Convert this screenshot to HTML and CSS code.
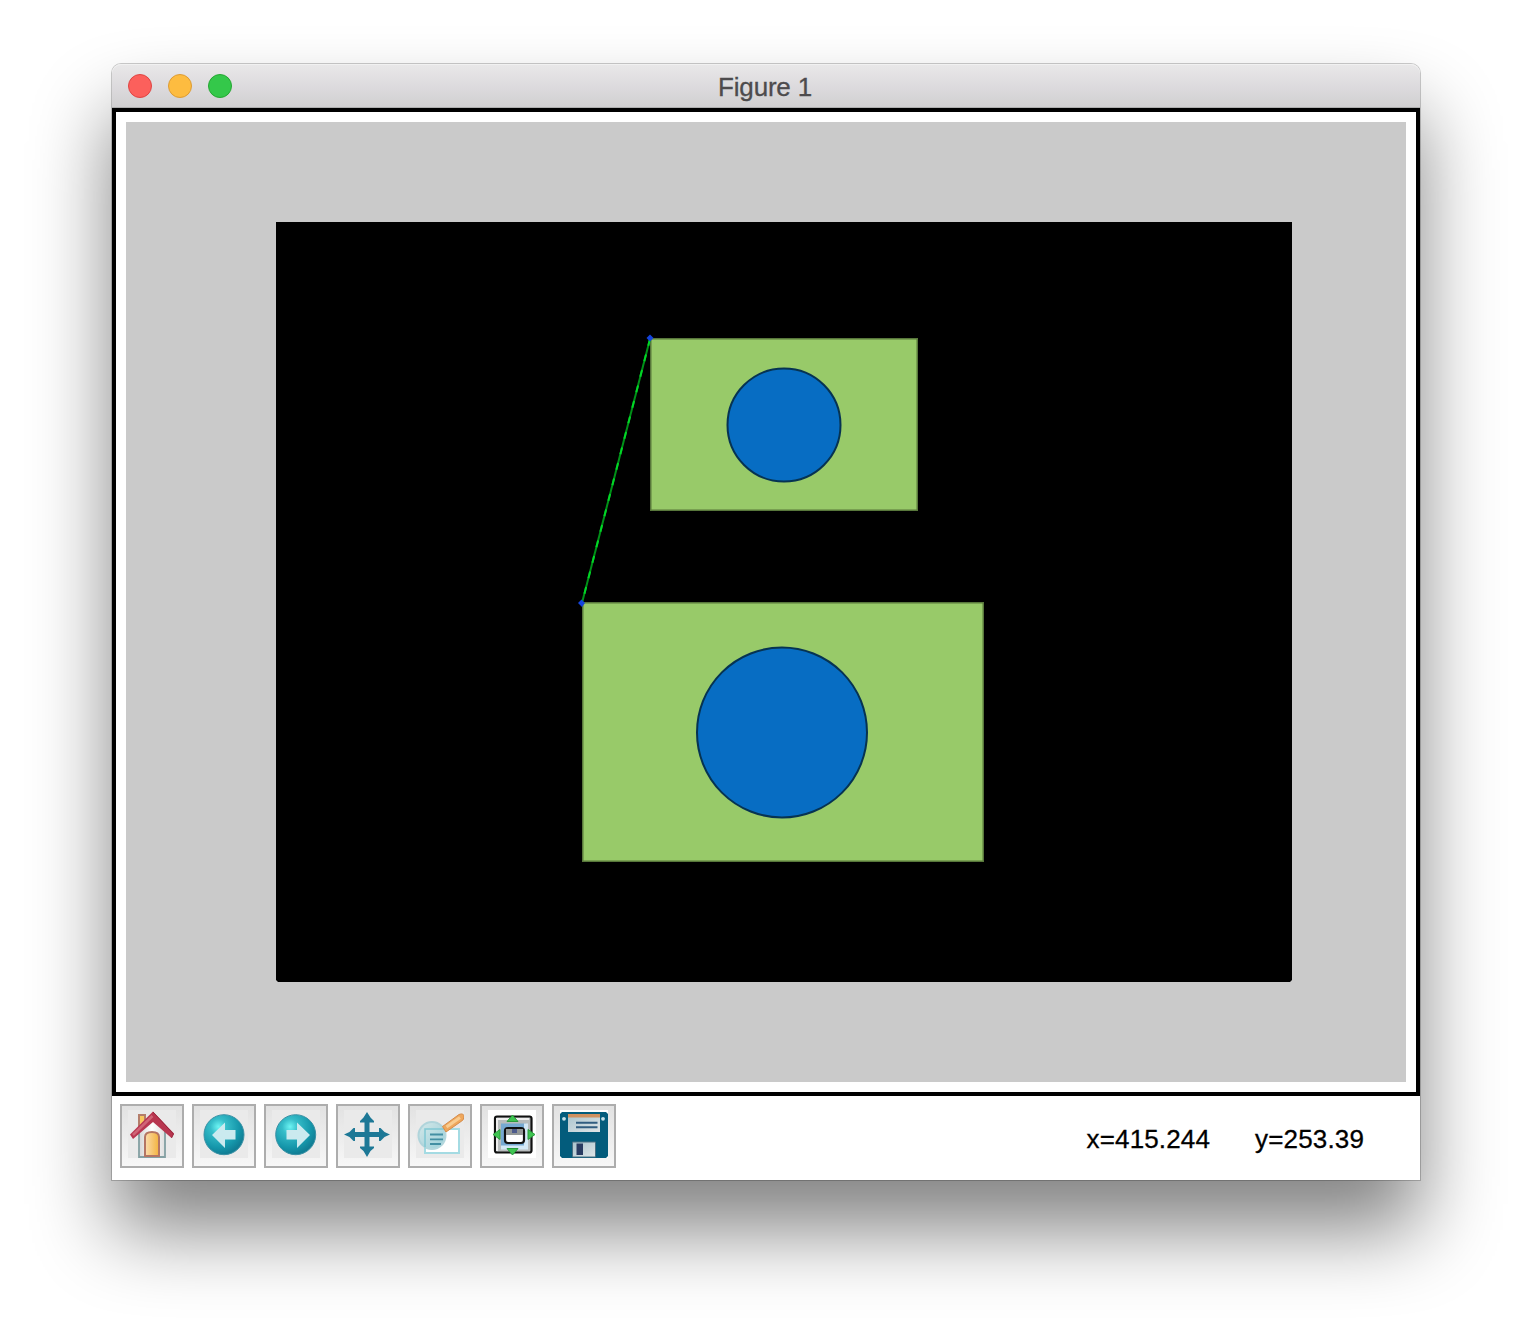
FILE: index.html
```
<!DOCTYPE html>
<html lang="en">
<head>
<meta charset="utf-8">
<title>Figure 1</title>
<link rel="stylesheet" href="styles.css">
</head>
<body>
<main class="window">
  <header class="titlebar">
    <div class="lights"><i class="light close"></i><i class="light minimize"></i><i class="light expand"></i></div>
    <h1 class="title">Figure 1</h1>
  </header>
  <section class="canvas">
    <svg class="plot" viewBox="126 122 1280 960">
      <path d="M276 222h1016v758l-2 2H278l-2-2z"/>
      <g fill="#98ca69" stroke="#58773b" stroke-width="1.5">
        <rect x="650.75" y="338.75" width="266.5" height="171.5"/>
        <rect x="582.75" y="602.75" width="400.5" height="258.5"/>
      </g>
      <g fill="#076dc3" stroke="#063352" stroke-width="2">
        <circle cx="784" cy="425" r="56.5"/>
        <circle cx="782" cy="732.5" r="85"/>
      </g>
      <path d="M650 339 582 603" stroke="#009018" stroke-width="2"/>
      <path d="M650 339 582 603" stroke="#00d726" stroke-width="2" stroke-dasharray="7 9"/>
      <g fill="#1444dc">
        <path d="M646.500 338 650 334.500 653.500 338 650 341.500z"/>
        <path d="M578 603 581.500 599.500 585 603 582 607z"/>
      </g>
    </svg>
  </section>
  <footer class="toolbar">
    <div class="buttons">
      <button class="tool" aria-label="Home">
        <svg class="icon" viewBox="0 0 48 48">
          <defs>
            <linearGradient id="door"><stop stop-color="#fbdcae"/><stop offset="1" stop-color="#f3b33d"/></linearGradient>
            <linearGradient id="wall"><stop stop-color="#d5d5d5"/><stop offset=".5" stop-color="#fff"/><stop offset="1" stop-color="#dedede"/></linearGradient>
          </defs>
          <rect x="11" y="5" width="6" height="12" fill="#f8c860" stroke="#b47e6b" stroke-width="2"/>
          <path d="M11 47V21L25 8l12 13v26z" fill="url(#wall)" stroke="#84a0a3" stroke-width="1.800"/>
          <path d="M17 46V27q0-5 7-5t7 5v19z" fill="url(#door)" stroke="#b47563" stroke-width="2"/>
          <path d="M25 1.500 46 23.500 43.500 28 25 12 5 29 2 24.500z" fill="#b83650"/>
          <path d="M24.500 6 5 25" stroke="#cf6577" stroke-width="2.500"/>
          <path d="M25 2 45.500 24 43.500 28" fill="none" stroke="#98263c"/>
        </svg>
      </button>
      <button class="tool" aria-label="Back">
        <svg class="icon" viewBox="0 0 48 48">
          <defs><radialGradient id="ball" cx=".36" cy=".3" r=".7"><stop stop-color="#6cf5f4"/><stop offset=".28" stop-color="#36bdc9"/><stop offset=".75" stop-color="#1596aa"/><stop offset="1" stop-color="#107d94"/></radialGradient></defs>
          <circle cx="24" cy="24.700" r="20" fill="url(#ball)" stroke="#3a91a5"/>
          <path d="M12 25 25 12.500V20h10.500v9.500H25V38z" fill="#cbeaef"/>
        </svg>
      </button>
      <button class="tool" aria-label="Forward">
        <svg class="icon" viewBox="0 0 48 48">
          <circle cx="23.700" cy="24.700" r="20" fill="url(#ball)" stroke="#3a91a5"/>
          <path d="M38 25 25 12.500V20H14.500v9.500H25V38z" fill="#cbeaef"/>
        </svg>
      </button>
      <button class="tool" aria-label="Pan">
        <svg class="icon" viewBox="0 0 48 48">
          <path d="M23 2 26.500 7.500 30 11v1.500h-4.500V22h9.500V18h1.500l4 4L46 24.500 40.500 27l-4 4H35v-4H25.500V36.500h4.500V38l-3.500 3L23 47 19.500 41 16 38v-1.500h4.500V27H11V31H9.500l-4-4L0 24.500 5.500 22l4-4H11v4h9.500V12.500H16V11l3.500-3.500z" fill="#1d7896"/>
        </svg>
      </button>
      <button class="tool" aria-label="Zoom">
        <svg class="icon" viewBox="0 0 48 48">
          <defs><linearGradient id="lens" x2="1" y2="1"><stop stop-color="#d4e9eb"/><stop offset="1" stop-color="#8bc8d2"/></linearGradient></defs>
          <rect x="9" y="19" width="34" height="24" fill="#fff" stroke="#a4dbe3" stroke-width="2"/>
          <circle cx="16" cy="25.500" r="13.500" fill="url(#lens)" stroke="#a9d2d9" stroke-width="2" opacity=".88"/>
          <path d="M9 37V19h20" fill="none" stroke="#84c9d3" stroke-width="1.500"/>
          <path d="M14 24.500h13M14 29.300h13M14 34h11" stroke="#438fa3" stroke-width="1.800"/>
          <path d="M26.500 16.500 43 4.500q5-2 5 2.500 0 3-3 4.500L30 22z" fill="#efa75c" stroke="#d58c4b"/>
          <path d="M30.500 17 44 7.500" stroke="#f9cd91" stroke-width="3"/>
        </svg>
      </button>
      <button class="tool" aria-label="Subplots">
        <svg class="icon" viewBox="0 0 48 48">
          <rect width="48" height="48" fill="#fff"/>
          <rect x="7" y="6.500" width="36.500" height="36" rx="2" fill="#b8bcbd" stroke="#111" stroke-width="2.200"/>
          <path d="M9 41V9h32" fill="none" stroke="#eee" stroke-width="2"/>
          <rect x="13" y="13.500" width="25" height="24" fill="#76a9d2"/>
          <path d="M13 37.500h25V13.500" fill="none" stroke="#d4e8f6" stroke-width="4"/>
          <rect x="17" y="18" width="19" height="15" rx="3" fill="#fff" stroke="#111" stroke-width="2.200"/>
          <path d="M18 19h17v6H18z" fill="#929796"/><path d="M24 19h5v4h-5z" fill="#4d5b8c"/>
          <g fill="#3fc451" stroke="#2a9a3d">
            <path d="M24.500 5 30 11.500H19z"/><path d="M24.500 45 30 38.500H19z"/><path d="M5 24.500 12 19.500v10z"/><path d="M47 24.500 40 19.500v10z"/>
          </g>
        </svg>
      </button>
      <button class="tool" aria-label="Save">
        <svg class="icon" viewBox="0 0 48 48">
          <defs><linearGradient id="metal" x2="1" y2="1"><stop stop-color="#a9c4cd"/><stop offset="1" stop-color="#e0e5e7"/></linearGradient></defs>
          <rect width="48" height="48" fill="#fff"/>
          <path d="M2 2H46l2 2V46l-2 2H2l-2-2V4z" fill="#035c7c"/>
          <rect x="8" y="4" width="32" height="18" fill="url(#metal)"/>
          <rect x="8" y="4" width="32" height="3.500" fill="#d09160"/>
          <path d="M16 12.800h21.500M16 17.200h21.500" stroke="#315d80" stroke-width="2"/>
          <path d="M12.500 32h23v15h-23z" fill="url(#metal)" stroke="#496f82"/>
          <path d="M16.500 33.500H23V45h-6.500z" fill="#293b61"/>
          <circle cx="4" cy="8.800" r="1.900" fill="#c7e1e8"/><circle cx="43" cy="8.800" r="1.900" fill="#c7e1e8"/>
        </svg>
      </button>
    </div>
    <p class="coords"><span class="coord-x">x=415.244</span><span class="coord-y">y=253.39</span></p>
  </footer>
</main>
</body>
</html>
```

FILE: styles.css
```
* { box-sizing: border-box; }
html, body { height: 100%; margin: 0; }
body {
  background: #fff;
  padding: 64px 112px 160px;
  overflow: hidden;
  font-family: "Liberation Sans", Arial, sans-serif;
}
.window {
  display: flex;
  flex-direction: column;
  width: 1308px;
  height: 1116px;
  background: #fff;
  border-radius: 9px 9px 0 0;
  box-shadow: 0 0 0 1px rgba(0, 0, 0, .2), 0 50px 80px rgba(0, 0, 0, .49);
}
.titlebar {
  display: grid;
  grid-template-columns: 1fr auto 1fr;
  align-items: center;
  height: 44px;
  padding: 0 16px;
  border-radius: 9px 9px 0 0;
  background: linear-gradient(#e9e8e9, #dddbde 50%, #d0cfd0);
  box-shadow: inset 0 1px #f1f1f1, inset 0 -1px #aeaeae;
}
.lights { display: flex; gap: 16px; }
.light { width: 24px; height: 24px; border-radius: 50%; border: 1px solid; }
.close { background: #fc605c; border-color: #df4543; }
.minimize { background: #fdbc40; border-color: #dd9c34; }
.expand { background: #34c84a; border-color: #25a732; }
.title {
  margin: 2px 2px 0 0;
  font-size: 26px;
  line-height: 30px;
  font-weight: 400;
  letter-spacing: -.2px;
  color: #4d4b4d;
  -webkit-text-stroke: .3px #4d4b4d;
}
.canvas {
  height: 988px;
  padding: 10px;
  border: 4px solid #000;
}
.plot { display: block; width: 1280px; height: 960px; background: #cacaca; }
.toolbar {
  display: flex;
  justify-content: space-between;
  height: 84px;
  padding: 8px 56px 0 8px;
}
.buttons { display: flex; gap: 8px; }
.tool {
  width: 64px;
  height: 64px;
  padding: 4px 6px;
  border: 2px solid #adadad;
  background: linear-gradient(#e2e2e2, #f7f7f7);
}
.icon { display: block; width: 48px; height: 48px; margin-top: -4px; background: #eaeaea; }
.coords {
  display: flex;
  gap: 45px;
  margin: 20px 0 0;
  font-size: 26px;
  line-height: 30px;
  letter-spacing: .15px;
  color: #000;
  -webkit-text-stroke: .3px #000;
}
```
